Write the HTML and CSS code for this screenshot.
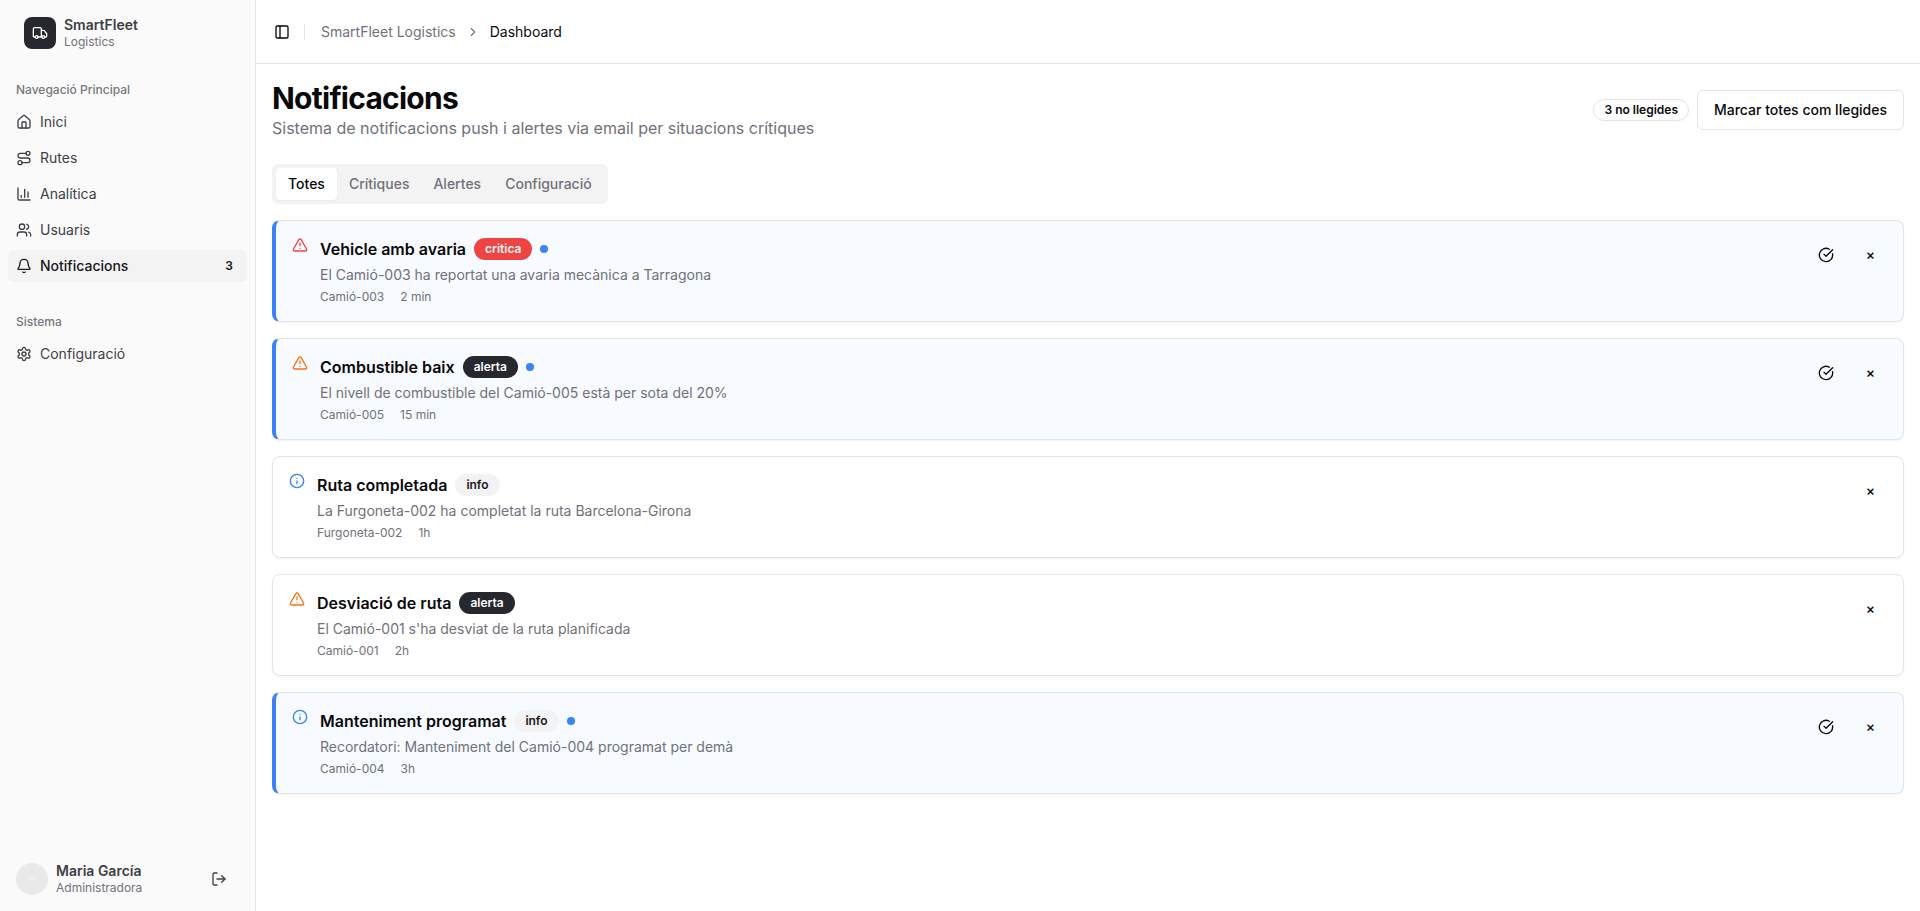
FILE: index.html
```html
<!DOCTYPE html>
<html lang="ca">
<head>
    <meta charset="UTF-8">
    <meta name="viewport" content="width=device-width, initial-scale=1.0">
    <title>SmartFleet Logistics</title>
    <link rel="stylesheet" href="styles.css">
</head>
<body>
    <!-- Shared icons -->
    <svg class="sprite" aria-hidden="true">
        <symbol id="icon-warning" viewBox="0 0 24 24">
            <path d="m21.73 18-8-14a2 2 0 0 0-3.48 0l-8 14A2 2 0 0 0 4 21h16a2 2 0 0 0 1.73-3"/>
            <path d="M12 9v4"/>
            <path d="M12 17h.01"/>
        </symbol>
        <symbol id="icon-info" viewBox="0 0 24 24">
            <circle cx="12" cy="12" r="10"/>
            <path d="M12 16v-4"/>
            <path d="M12 8h.01"/>
        </symbol>
        <symbol id="icon-check" viewBox="0 0 24 24">
            <path d="M21.801 10A10 10 0 1 1 17 3.335"/>
            <path d="m9 11 3 3L22 4"/>
        </symbol>
    </svg>

    <div class="layout">
        <aside class="sidebar">
            <div class="brand">
                <div class="brand-logo">
                    <svg class="icon" viewBox="0 0 24 24">
                        <path d="M14 18V6a2 2 0 0 0-2-2H4a2 2 0 0 0-2 2v11a1 1 0 0 0 1 1h2"/>
                        <path d="M15 18H9"/>
                        <path d="M19 18h2a1 1 0 0 0 1-1v-3.65a1 1 0 0 0-.22-.624l-3.48-4.35A1 1 0 0 0 17.52 8H14"/>
                        <circle cx="17" cy="18" r="2"/>
                        <circle cx="7" cy="18" r="2"/>
                    </svg>
                </div>
                <div class="two-lines">
                    <span class="line-main">SmartFleet</span>
                    <span class="line-sub">Logistics</span>
                </div>
            </div>

            <nav class="nav">
                <div class="nav-group">
                    <div class="nav-label">Navegació Principal</div>
                    <ul class="nav-list">
                        <li><a class="nav-link" href="#">
                            <svg class="icon" viewBox="0 0 24 24"><path d="M15 21v-8a1 1 0 0 0-1-1h-4a1 1 0 0 0-1 1v8"/><path d="M3 10a2 2 0 0 1 .709-1.528l7-5.999a2 2 0 0 1 2.582 0l7 5.999A2 2 0 0 1 21 10v9a2 2 0 0 1-2 2H5a2 2 0 0 1-2-2z"/></svg>
                            <span>Inici</span>
                        </a></li>
                        <li><a class="nav-link" href="#">
                            <svg class="icon" viewBox="0 0 24 24"><circle cx="6" cy="19" r="3"/><path d="M9 19h8.5a3.5 3.5 0 0 0 0-7h-11a3.5 3.5 0 0 1 0-7H15"/><circle cx="18" cy="5" r="3"/></svg>
                            <span>Rutes</span>
                        </a></li>
                        <li><a class="nav-link" href="#">
                            <svg class="icon" viewBox="0 0 24 24"><path d="M3 3v16a2 2 0 0 0 2 2h16"/><path d="M18 17V9"/><path d="M13 17V5"/><path d="M8 17v-3"/></svg>
                            <span>Analítica</span>
                        </a></li>
                        <li><a class="nav-link" href="#">
                            <svg class="icon" viewBox="0 0 24 24"><path d="M16 21v-2a4 4 0 0 0-4-4H6a4 4 0 0 0-4 4v2"/><circle cx="9" cy="7" r="4"/><path d="M22 21v-2a4 4 0 0 0-3-3.87"/><path d="M16 3.13a4 4 0 0 1 0 7.75"/></svg>
                            <span>Usuaris</span>
                        </a></li>
                        <li><a class="nav-link active" href="#">
                            <svg class="icon" viewBox="0 0 24 24"><path d="M10.268 21a2 2 0 0 0 3.464 0"/><path d="M3.262 15.326A1 1 0 0 0 4 17h16a1 1 0 0 0 .74-1.673C19.41 13.956 18 12.499 18 8A6 6 0 0 0 6 8c0 4.499-1.411 5.956-2.738 7.326"/></svg>
                            <span>Notificacions</span>
                            <span class="nav-count">3</span>
                        </a></li>
                    </ul>
                </div>
                <div class="nav-group">
                    <div class="nav-label">Sistema</div>
                    <ul class="nav-list">
                        <li><a class="nav-link" href="#">
                            <svg class="icon" viewBox="0 0 24 24"><path d="M12.22 2h-.44a2 2 0 0 0-2 2v.18a2 2 0 0 1-1 1.73l-.43.25a2 2 0 0 1-2 0l-.15-.08a2 2 0 0 0-2.73.73l-.22.38a2 2 0 0 0 .73 2.73l.15.1a2 2 0 0 1 1 1.72v.51a2 2 0 0 1-1 1.74l-.15.09a2 2 0 0 0-.73 2.73l.22.38a2 2 0 0 0 2.73.73l.15-.08a2 2 0 0 1 2 0l.43.25a2 2 0 0 1 1 1.73V20a2 2 0 0 0 2 2h.44a2 2 0 0 0 2-2v-.18a2 2 0 0 1 1-1.73l.43-.25a2 2 0 0 1 2 0l.15.08a2 2 0 0 0 2.73-.73l.22-.39a2 2 0 0 0-.73-2.73l-.15-.08a2 2 0 0 1-1-1.74v-.5a2 2 0 0 1 1-1.74l.15-.09a2 2 0 0 0 .73-2.73l-.22-.38a2 2 0 0 0-2.73-.73l-.15.08a2 2 0 0 1-2 0l-.43-.25a2 2 0 0 1-1-1.73V4a2 2 0 0 0-2-2z"/><circle cx="12" cy="12" r="3"/></svg>
                            <span>Configuració</span>
                        </a></li>
                    </ul>
                </div>
            </nav>

            <div class="user">
                <div class="avatar"></div>
                <div class="two-lines">
                    <span class="line-main">Maria García</span>
                    <span class="line-sub">Administradora</span>
                </div>
                <button class="logout" type="button" aria-label="Tancar sessió">
                    <svg class="icon" viewBox="0 0 24 24"><path d="M9 21H5a2 2 0 0 1-2-2V5a2 2 0 0 1 2-2h4"/><path d="m16 17 5-5-5-5"/><path d="M21 12H9"/></svg>
                </button>
            </div>
        </aside>

        <div class="content">
            <header class="topbar">
                <button class="toggle" type="button" aria-label="Menú lateral">
                    <svg class="icon" viewBox="0 0 24 24"><rect width="18" height="18" x="3" y="3" rx="2"/><path d="M9 3v18"/></svg>
                </button>
                <div class="separator"></div>
                <nav class="breadcrumb">
                    <a href="#">SmartFleet Logistics</a>
                    <svg class="icon chevron" viewBox="0 0 24 24"><path d="m9 18 6-6-6-6"/></svg>
                    <span class="current">Dashboard</span>
                </nav>
            </header>

            <main class="page">
                <div class="page-header">
                    <div>
                        <h1>Notificacions</h1>
                        <p class="subtitle">Sistema de notificacions push i alertes via email per situacions crítiques</p>
                    </div>
                    <div class="page-actions">
                        <span class="badge outline">3 no llegides</span>
                        <button class="btn" type="button">Marcar totes com llegides</button>
                    </div>
                </div>

                <div class="tabs" role="tablist">
                    <button class="tab selected" type="button" role="tab" aria-selected="true">Totes</button>
                    <button class="tab" type="button" role="tab">Crítiques</button>
                    <button class="tab" type="button" role="tab">Alertes</button>
                    <button class="tab" type="button" role="tab">Configuració</button>
                </div>

                <div class="list">
                    <article class="card unread">
                        <svg class="icon critical"><use href="#icon-warning"/></svg>
                        <div class="card-body">
                            <div class="card-title">
                                <h2>Vehicle amb avaria</h2>
                                <span class="badge red">critica</span>
                                <span class="dot"></span>
                            </div>
                            <p class="message">El Camió-003 ha reportat una avaria mecànica a Tarragona</p>
                            <div class="meta"><span>Camió-003</span><span>2 min</span></div>
                        </div>
                        <div class="card-actions">
                            <button class="ghost" type="button" aria-label="Marcar com llegida"><svg class="icon"><use href="#icon-check"/></svg></button>
                            <button class="ghost" type="button" aria-label="Eliminar">×</button>
                        </div>
                    </article>

                    <article class="card unread">
                        <svg class="icon warning"><use href="#icon-warning"/></svg>
                        <div class="card-body">
                            <div class="card-title">
                                <h2>Combustible baix</h2>
                                <span class="badge dark">alerta</span>
                                <span class="dot"></span>
                            </div>
                            <p class="message">El nivell de combustible del Camió-005 està per sota del 20%</p>
                            <div class="meta"><span>Camió-005</span><span>15 min</span></div>
                        </div>
                        <div class="card-actions">
                            <button class="ghost" type="button" aria-label="Marcar com llegida"><svg class="icon"><use href="#icon-check"/></svg></button>
                            <button class="ghost" type="button" aria-label="Eliminar">×</button>
                        </div>
                    </article>

                    <article class="card">
                        <svg class="icon info"><use href="#icon-info"/></svg>
                        <div class="card-body">
                            <div class="card-title">
                                <h2>Ruta completada</h2>
                                <span class="badge gray">info</span>
                            </div>
                            <p class="message">La Furgoneta-002 ha completat la ruta Barcelona-Girona</p>
                            <div class="meta"><span>Furgoneta-002</span><span>1h</span></div>
                        </div>
                        <div class="card-actions">
                            <button class="ghost" type="button" aria-label="Eliminar">×</button>
                        </div>
                    </article>

                    <article class="card">
                        <svg class="icon warning"><use href="#icon-warning"/></svg>
                        <div class="card-body">
                            <div class="card-title">
                                <h2>Desviació de ruta</h2>
                                <span class="badge dark">alerta</span>
                            </div>
                            <p class="message">El Camió-001 s'ha desviat de la ruta planificada</p>
                            <div class="meta"><span>Camió-001</span><span>2h</span></div>
                        </div>
                        <div class="card-actions">
                            <button class="ghost" type="button" aria-label="Eliminar">×</button>
                        </div>
                    </article>

                    <article class="card unread">
                        <svg class="icon info"><use href="#icon-info"/></svg>
                        <div class="card-body">
                            <div class="card-title">
                                <h2>Manteniment programat</h2>
                                <span class="badge gray">info</span>
                                <span class="dot"></span>
                            </div>
                            <p class="message">Recordatori: Manteniment del Camió-004 programat per demà</p>
                            <div class="meta"><span>Camió-004</span><span>3h</span></div>
                        </div>
                        <div class="card-actions">
                            <button class="ghost" type="button" aria-label="Marcar com llegida"><svg class="icon"><use href="#icon-check"/></svg></button>
                            <button class="ghost" type="button" aria-label="Eliminar">×</button>
                        </div>
                    </article>
                </div>
            </main>
        </div>
    </div>
</body>
</html>
```
FILE: styles.css
```css
* {
    box-sizing: border-box;
    margin: 0;
    padding: 0;
}
body {
    font-family: Inter, sans-serif;
    font-size: 14px;
    line-height: 20px;
    color: #09090b;
    background-color: #fff;
}
a {
    color: inherit;
    text-decoration: none;
}
button {
    font: inherit;
    color: inherit;
    background: none;
    border: none;
    cursor: pointer;
}
ul {
    list-style: none;
}
.sprite {
    display: none;
}
.icon {
    display: block;
    width: 16px;
    height: 16px;
    flex-shrink: 0;
    fill: none;
    stroke: currentColor;
    stroke-width: 2;
    stroke-linecap: round;
    stroke-linejoin: round;
}
.layout {
    display: flex;
    min-height: 100vh;
}

/* Sidebar */
.sidebar {
    display: flex;
    flex-direction: column;
    width: 256px;
    flex-shrink: 0;
    background-color: #fafafa;
    border-right: 1px solid #e4e4e4;
    color: #3f3f46;
}
.brand {
    display: flex;
    align-items: center;
    gap: 8px;
    padding: 16px 24px;
}
.brand-logo {
    display: flex;
    align-items: center;
    justify-content: center;
    width: 32px;
    height: 32px;
    border-radius: 8px;
    background-color: #27272f;
    color: #fafafa;
}
.two-lines {
    display: flex;
    flex-direction: column;
    flex: 1;
}
.line-main {
    font-weight: 600;
    line-height: 18px;
}
.line-sub {
    font-size: 12px;
    line-height: 16px;
    color: #71717a;
}
.nav {
    display: flex;
    flex-direction: column;
    flex: 1;
    gap: 8px;
}
.nav-group {
    padding: 8px;
}
.nav-label {
    padding: 0 8px;
    font-size: 12px;
    line-height: 32px;
    font-weight: 500;
    color: #77777c;
}
.nav-list {
    display: flex;
    flex-direction: column;
    gap: 4px;
}
.nav-link {
    display: flex;
    align-items: center;
    gap: 8px;
    height: 32px;
    padding: 0 8px;
    border-radius: 6px;
}
.nav-link.active {
    background-color: #f3f3f3;
    color: #18181b;
    font-weight: 500;
}
.nav-count {
    margin-left: auto;
    padding: 0 6px;
    font-size: 12px;
    font-weight: 600;
}
.user {
    display: flex;
    align-items: center;
    gap: 8px;
    padding: 15px 16px;
}
.avatar {
    width: 32px;
    height: 32px;
    border-radius: 50%;
    background: radial-gradient(circle, #efefef 0, #e9e9e9 4px);
}
.logout {
    padding: 8px 12px;
}

/* Top bar */
.content {
    flex: 1;
    min-width: 0;
}
.topbar {
    display: flex;
    align-items: center;
    gap: 8px;
    height: 64px;
    padding: 0 12px;
    border-bottom: 1px solid #e4e4e4;
}
.toggle {
    padding: 6px;
}
.separator {
    width: 1px;
    height: 16px;
    margin-right: 8px;
    background-color: #e4e4e4;
}
.breadcrumb {
    display: flex;
    align-items: center;
    gap: 10px;
    color: #71717a;
}
.chevron {
    width: 14px;
    height: 14px;
}
.current {
    color: #09090b;
}

/* Page */
.page {
    padding: 16px;
}
.page-header {
    display: flex;
    align-items: center;
    justify-content: space-between;
    margin-bottom: 24px;
}
h1 {
    font-size: 30px;
    line-height: 36px;
    font-weight: 700;
    letter-spacing: -0.025em;
}
.subtitle {
    font-size: 16px;
    line-height: 24px;
    color: #71717a;
}
.page-actions {
    display: flex;
    align-items: center;
    gap: 8px;
}
.btn {
    height: 40px;
    padding: 0 16px;
    border: 1px solid #e4e4e4;
    border-radius: 6px;
    font-weight: 500;
}
.badge {
    padding: 2px 10px;
    border: 1px solid transparent;
    border-radius: 11px;
    font-size: 12px;
    line-height: 16px;
    font-weight: 600;
}
.badge.outline {
    border-color: #e4e4e4;
}
.badge.red {
    background-color: #ef4444;
    color: #fafafa;
}
.badge.dark {
    background-color: #27272f;
    color: #fafafa;
}
.badge.gray {
    background-color: #f3f3f3;
    color: #18181b;
}
.tabs {
    display: inline-flex;
    padding: 4px;
    border-radius: 6px;
    background-color: #f3f3f3;
}
.tab {
    height: 32px;
    padding: 0 12px;
    border-radius: 4px;
    font-weight: 500;
    color: #71717a;
}
.tab.selected {
    background-color: #fff;
    color: #09090b;
    box-shadow: 0 1px 2px rgba(0, 0, 0, 0.05);
}

/* Notifications */
.list {
    display: flex;
    flex-direction: column;
    gap: 16px;
    margin-top: 16px;
}
.card {
    display: flex;
    align-items: flex-start;
    gap: 12px;
    padding: 16px;
    border: 1px solid #e4e4e4;
    border-radius: 8px;
    box-shadow: 0 1px 2px rgba(0, 0, 0, 0.05);
}
.card.unread {
    border-left: 4px solid #3b82f6;
    background-color: #f7faff;
}
.critical {
    color: #ef4444;
}
.warning {
    color: #f97316;
}
.info {
    color: #3b82f6;
}
.card-body {
    display: flex;
    flex-direction: column;
    flex: 1;
    gap: 4px;
}
.card-title {
    display: flex;
    align-items: center;
    gap: 8px;
}
h2 {
    font-size: 16px;
    line-height: 24px;
    font-weight: 600;
}
.dot {
    width: 8px;
    height: 8px;
    border-radius: 50%;
    background-color: #3b82f6;
}
.message {
    color: #71717a;
}
.meta {
    display: flex;
    gap: 16px;
    font-size: 12px;
    line-height: 16px;
    color: #71717a;
}
.card-actions {
    display: flex;
    gap: 8px;
}
.ghost {
    height: 36px;
    padding: 0 12px;
    font-weight: 500;
}
```
